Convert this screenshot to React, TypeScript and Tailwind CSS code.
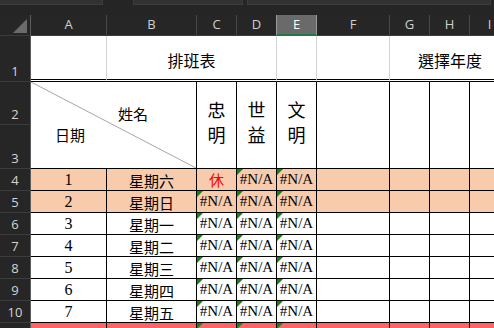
import React from 'react';

interface DayRow {
    num: number;
    day: string;
    first: string;
    bg: string;
}

const cjk = "font-['Noto_Sans_CJK_TC','Noto_Sans',sans-serif]";
const serif = "font-['Liberation_Serif','Noto_Sans_CJK_TC',serif]";

const columns = ['A', 'B', 'C', 'D', 'E', 'F', 'G', 'H', 'I'];

const rows: DayRow[] = [
    { num: 1, day: '星期六', first: '休', bg: 'bg-[#f8cbad]' },
    { num: 2, day: '星期日', first: '#N/A', bg: 'bg-[#f8cbad]' },
    { num: 3, day: '星期一', first: '#N/A', bg: 'bg-white' },
    { num: 4, day: '星期二', first: '#N/A', bg: 'bg-white' },
    { num: 5, day: '星期三', first: '#N/A', bg: 'bg-white' },
    { num: 6, day: '星期四', first: '#N/A', bg: 'bg-white' },
    { num: 7, day: '星期五', first: '#N/A', bg: 'bg-white' },
];

const ErrorMark: React.FC = () => (
    <span className="absolute top-0 left-0 w-0 h-0 border-t-[6px] border-r-[6px] border-t-[#128412] border-r-transparent" />
);

const RowHead: React.FC<{ label?: string | number }> = ({ label }) => (
    <div className="flex items-end justify-center pb-[3px] bg-[#262626] border-b border-r border-b-[#3c3c3c] border-r-[#5c5c5c] text-[13px] leading-none text-[#d4d4d4] font-['Open_Sans',sans-serif]">
        {label}
    </div>
);

const DataCell: React.FC<{ bg: string; mark?: boolean; children?: React.ReactNode; className?: string }> = ({ bg, mark, children, className }) => (
    <div className={`relative flex items-end justify-center border-b border-r border-black ${bg} ${className ?? ''}`}>
        {mark && <ErrorMark />}
        {children}
    </div>
);

const App: React.FC = () => {
    return (
        <div className="w-[494px] h-[328px] overflow-hidden bg-[#252525]">
            {/* name box / formula bar strip */}
            <div className="flex h-[15px] gap-[30px]">
                <div className="w-[103px] h-[5px] bg-[#323232] border-b border-r border-[#3d3d3d]" />
                <div className="w-[110px] h-[5px] bg-[#323232] border-b border-x border-[#3d3d3d]" />
                <div className="w-[244px] h-[5px] -ml-[26px] bg-[#323232] border-b border-x border-[#3d3d3d]" />
            </div>

            <div className="grid grid-cols-[31px_76px_90px_40px_40px_40px_73px_40px_40px_40px] grid-rows-[21px_46px_43px_44px_repeat(8,22px)]">
                {/* corner */}
                <div className="relative bg-[#262626] border-b border-r border-b-[#3c3c3c] border-r-[#5c5c5c]">
                    <svg className="absolute right-[3px] bottom-[2px]" width="14" height="14" viewBox="0 0 14 14">
                        <polygon points="14,0 14,14 0,14" fill="#6b6b6b" />
                    </svg>
                </div>
                {columns.map((c) => (
                    <div
                        key={c}
                        className={`flex items-center justify-center text-[13px] font-['Open_Sans',sans-serif] border-r ${c === 'E' ? 'bg-[#6a6a6a] text-white border-b-2 border-b-[#1f7a45] border-r-[#9a9a9a] border-l border-l-[#9a9a9a] -ml-px' : 'bg-[#262626] text-[#cfcfcf] border-b border-b-[#3c3c3c] border-r-[#474747]'}`}
                    >
                        {c}
                    </div>
                ))}

                {/* row 1 */}
                <RowHead label={1} />
                <div className="bg-white border-r border-r-[#d4d4d4] border-b-[3px] border-double border-b-black" />
                <div className={`col-span-3 flex items-end justify-center pb-[11px] bg-white border-r border-r-[#d4d4d4] border-b-[3px] border-double border-b-black text-[16px] leading-none text-black ${cjk}`}>
                    排班表
                </div>
                <div className="bg-white border-r border-r-[#d4d4d4] border-b-[3px] border-double border-b-black" />
                <div className="bg-white border-r border-r-[#d4d4d4] border-b-[3px] border-double border-b-black" />
                <div className={`col-span-3 flex items-end justify-center pb-[11px] bg-white border-b-[3px] border-double border-b-black text-[16px] leading-none text-black ${cjk}`}>
                    選擇年度
                </div>

                {/* rows 2-3 */}
                <RowHead label={2} />
                <div className={`relative col-span-2 row-span-2 bg-white border-b border-r border-black text-[15px] leading-none text-black ${cjk}`}>
                    <svg className="absolute inset-0" width="100%" height="100%" viewBox="0 0 165 86" preserveAspectRatio="none">
                        <line x1="0" y1="0" x2="165" y2="86" stroke="#a6a6a6" strokeWidth="1" />
                    </svg>
                    <div className="pt-[24px] pl-[87px]">姓名</div>
                    <div className="pt-[6px] pl-[24px]">日期</div>
                </div>
                {['忠明', '世益', '文明'].map((name) => (
                    <div key={name} className={`row-span-2 flex flex-col items-center justify-center pb-[6px] bg-white border-b border-r border-black text-[18px] leading-[25px] text-black ${cjk}`}>
                        <span>{name[0]}</span>
                        <span>{name[1]}</span>
                    </div>
                ))}
                <div className="row-span-2 bg-white border-b border-r border-black" />
                <div className="row-span-2 bg-white border-b border-r border-black" />
                <div className="row-span-2 bg-white border-b border-r border-black" />
                <div className="row-span-2 bg-white border-b border-r border-black" />
                <RowHead label={3} />

                {/* rows 4-10 */}
                {rows.map((r, i) => (
                    <React.Fragment key={r.num}>
                        <RowHead label={i + 4} />
                        <DataCell bg={r.bg} className={`pb-[2px] text-[16px] leading-none text-black ${serif}`}>{r.num}</DataCell>
                        <DataCell bg={r.bg} className={`pb-[2px] text-[15px] leading-none text-black ${cjk}`}>{r.day}</DataCell>
                        <DataCell bg={r.bg} mark={r.first === '#N/A'} className={`pb-[3px] text-[15px] leading-none ${r.first === '休' ? `text-[#ff0000] ${cjk}` : `text-black ${serif}`}`}>
                            {r.first}
                        </DataCell>
                        <DataCell bg={r.bg} mark className={`pb-[3px] text-[15px] leading-none text-black ${serif}`}>#N/A</DataCell>
                        <DataCell bg={r.bg} mark className={`pb-[3px] text-[15px] leading-none text-black ${serif}`}>#N/A</DataCell>
                        <DataCell bg={r.bg} />
                        <DataCell bg={r.bg} />
                        <DataCell bg={r.bg} />
                        <DataCell bg={r.bg} />
                    </React.Fragment>
                ))}

                {/* row 11 */}
                <RowHead />
                <DataCell bg="bg-[#ff6363]" />
                <DataCell bg="bg-[#ff6363]" />
                <DataCell bg="bg-[#ff6363]" mark />
                <DataCell bg="bg-[#ff6363]" mark />
                <DataCell bg="bg-[#ff6363]" mark />
                <DataCell bg="bg-[#ff6363]" />
                <DataCell bg="bg-[#ff6363]" />
                <DataCell bg="bg-[#ff6363]" />
                <DataCell bg="bg-[#ff6363]" />
            </div>
        </div>
    );
};

export default App;
